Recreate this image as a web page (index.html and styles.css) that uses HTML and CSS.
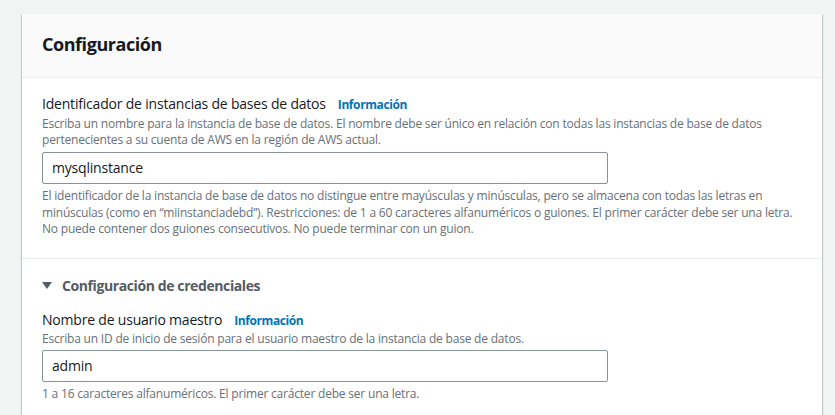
FILE: index.html
```html
<!DOCTYPE html>
<html lang="es">
<head>
<meta charset="utf-8">
<link rel="stylesheet" href="styles.css">
</head>
<body>
<div class="page">
  <section class="card">
    <header class="card-header">
      <h2 class="card-title">Configuración</h2>
    </header>
    <div class="card-section">
      <div class="field">
        <div class="label-row"><span class="label">Identificador de instancias de bases de datos</span><a class="info">Información</a></div>
        <p class="desc">Escriba un nombre para la instancia de base de datos. El nombre debe ser único en relación con todas las instancias de base de datos pertenecientes a su cuenta de AWS en la región de AWS actual.</p>
        <div class="input">mysqlinstance</div>
        <p class="hint">El identificador de la instancia de base de datos no distingue entre mayúsculas y minúsculas, pero se almacena con todas las letras en minúsculas (como en “miinstanciadebd”). Restricciones: de 1 a 60 caracteres alfanuméricos o guiones. El primer carácter debe ser una letra. No puede contener dos guiones consecutivos. No puede terminar con un guion.</p>
      </div>
    </div>
    <div class="card-section second">
      <div class="expander"><span class="caret"></span><span>Configuración de credenciales</span></div>
      <div class="field">
        <div class="label-row"><span class="label">Nombre de usuario maestro</span><a class="info">Información</a></div>
        <p class="desc">Escriba un ID de inicio de sesión para el usuario maestro de la instancia de base de datos.</p>
        <div class="input">admin</div>
        <p class="hint">1 a 16 caracteres alfanuméricos. El primer carácter debe ser una letra.</p>
      </div>
    </div>
  </section>
</div>
</body>
</html>
```

FILE: styles.css
```css
* { box-sizing: border-box; }
html, body { margin: 0; padding: 0; }
body {
  background: #f2f3f3;
  font-family: "Open Sans", "Noto Sans", sans-serif;
  color: #16191f;
  width: 835px;
  height: 415px;
  overflow: hidden;
  letter-spacing: -0.2px;
}
.page {
  padding: 14px 13px 0 22px;
}
.card {
  background: #fff;
  width: 800px;
  box-shadow: 0 1px 1px 0 rgba(0,28,36,.3), 1px 1px 1px 0 rgba(0,28,36,.15), -1px 1px 1px 0 rgba(0,28,36,.15);
}
.card-header {
  background: #fafafa;
  height: 64px;
  border-bottom: 1px solid #eaeded;
  display: flex;
  align-items: center;
  padding: 0 20px;
}
.card-title {
  margin: 0;
  font-size: 18px;
  font-weight: 700;
  line-height: 24px;
  color: #16191f;
  padding-bottom: 4px;
  letter-spacing: -0.45px;
}
.card-section {
  padding: 15px 20px 20px;
}
.card-section.second {
  border-top: 1px solid #eaeded;
  padding-top: 16px;
}
.label-row {
  display: flex;
  align-items: baseline;
  gap: 12px;
  line-height: 22px;
}
.label {
  font-size: 14px;
  color: #16191f;
}
.info {
  font-size: 12px;
  font-weight: 700;
  color: #0073bb;
  letter-spacing: -0.4px;
}
.desc, .hint {
  margin: 0;
  font-size: 12px;
  line-height: 16px;
  color: #687078;
}
.desc { margin-bottom: 4px; }
.hint { margin-top: 4px; line-height: 16.5px; }
.input {
  width: 566px;
  height: 32px;
  border: 1px solid #879596;
  border-radius: 2px;
  padding: 0 9px;
  font-size: 14px;
  line-height: 30px;
  color: #16191f;
}
.second .label-row { line-height: 20px; }
.second .desc { margin-bottom: 3px; }
.expander {
  display: flex;
  align-items: center;
  gap: 10px;
  font-size: 14px;
  font-weight: 700;
  line-height: 22px;
  color: #545b64;
  margin-bottom: 13px;
  letter-spacing: -0.4px;
}
.caret {
  width: 0;
  height: 0;
  border-left: 5px solid transparent;
  border-right: 5px solid transparent;
  border-top: 7px solid #545b64;
}
```
